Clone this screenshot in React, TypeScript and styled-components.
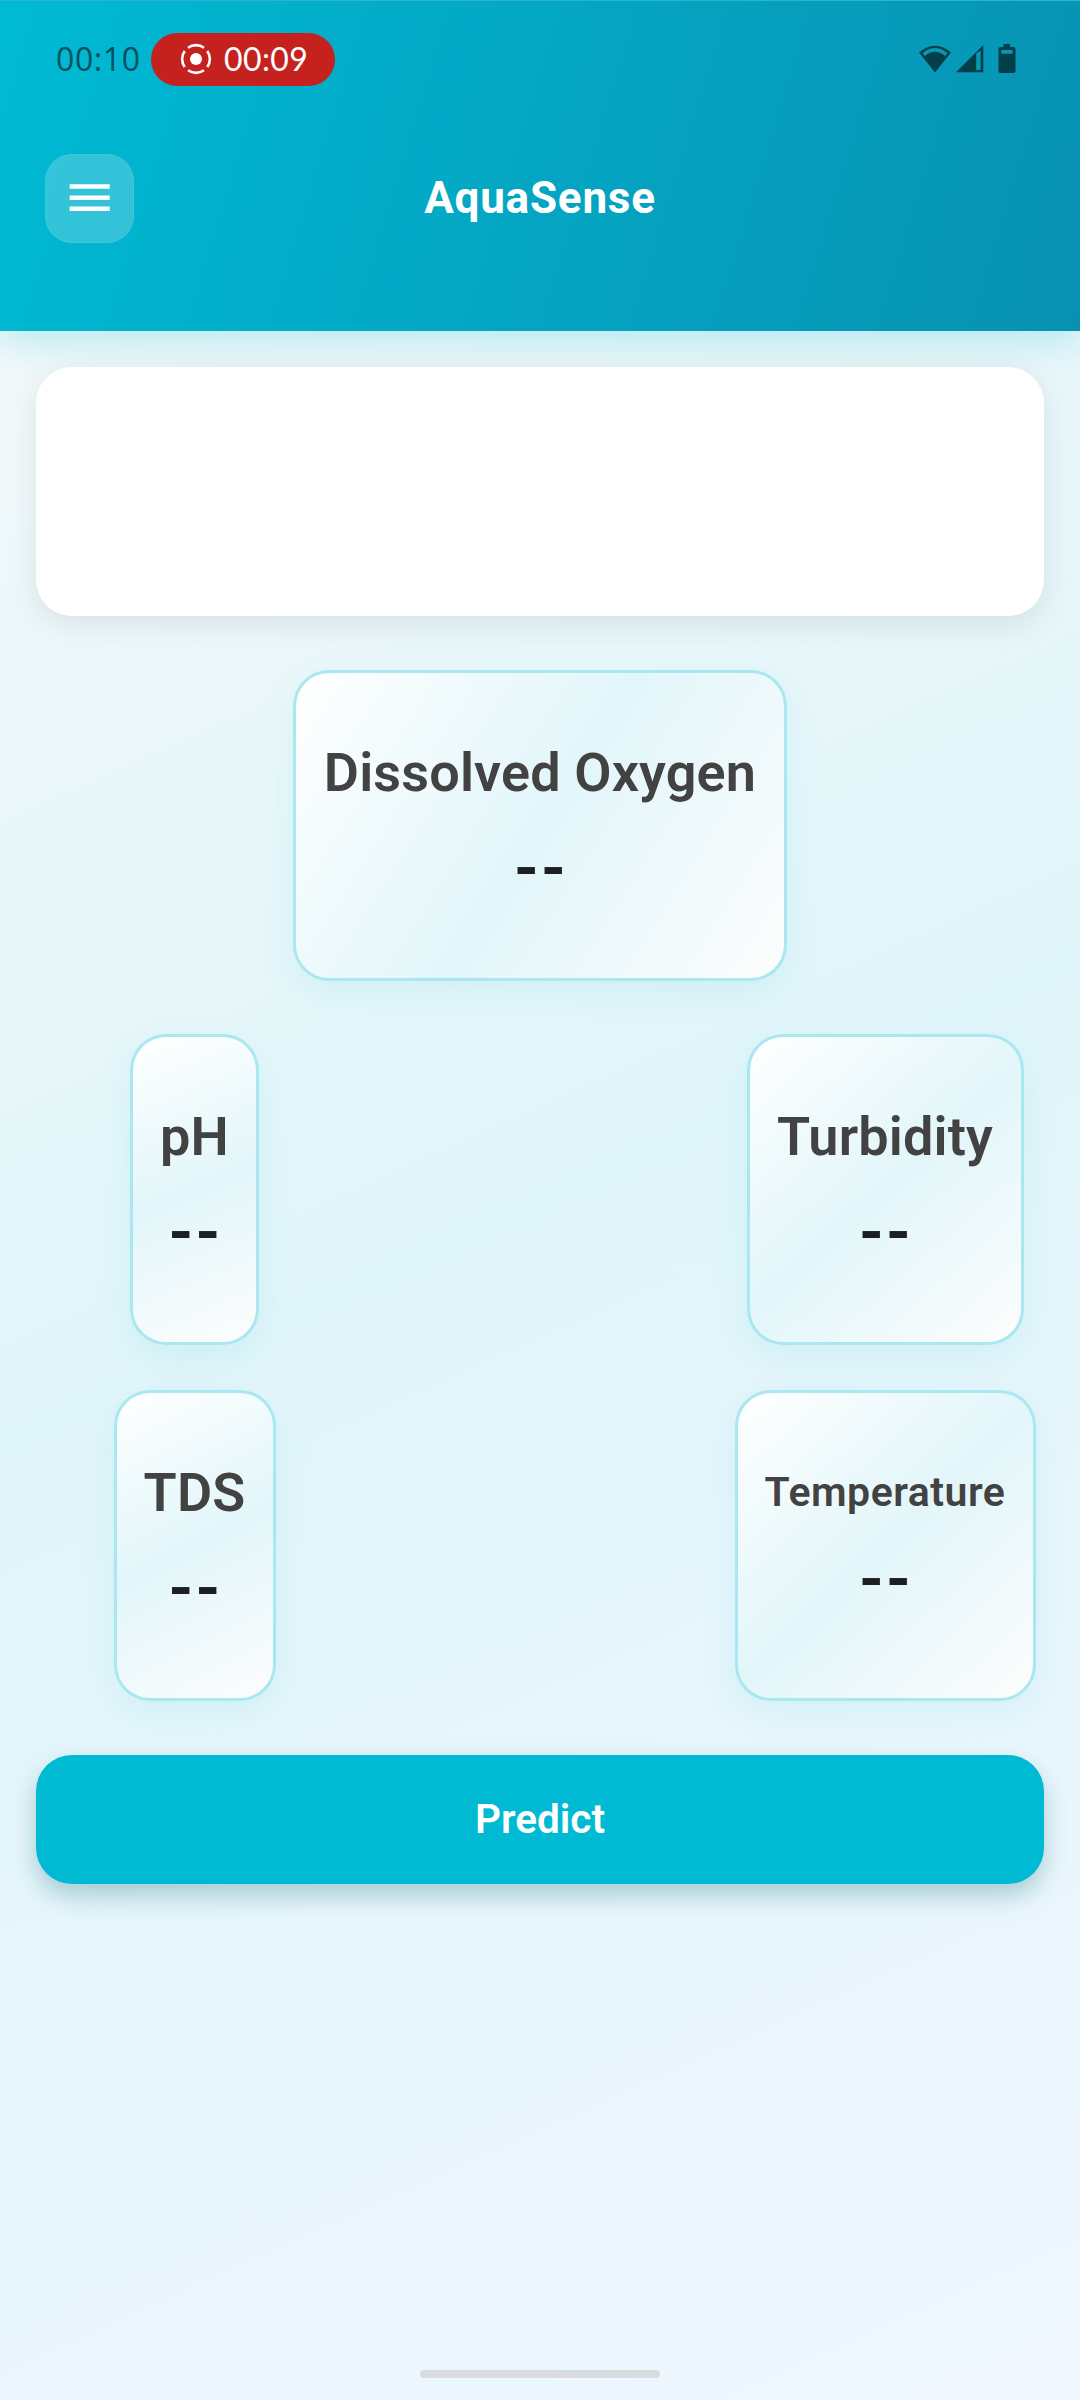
import React from 'react';
import styled, { createGlobalStyle } from 'styled-components';

const GlobalStyle = createGlobalStyle`
  * { box-sizing: border-box; }
  html, body { margin: 0; padding: 0; }
  body { font-family: Roboto, "Noto Sans", sans-serif; }
`;

const Screen = styled.div`
  width: 1080px;
  height: 2400px;
  overflow: hidden;
  display: flex;
  flex-direction: column;
  background: linear-gradient(155.8deg, #f8fafb 0%, #e0f5f9 50%, #f0f7ff 100%);
`;

const Header = styled.header`
  height: 331px;
  flex: none;
  background: linear-gradient(107deg, #00bad4 0%, #0891b2 100%);
  box-shadow: 0 12px 36px rgba(0, 188, 212, 0.24);
  border-top: 1px solid #2bb5cb;
`;

const StatusBar = styled.div`
  height: 116px;
  display: flex;
  align-items: center;
  padding: 0 64px 0 56px;
`;

const Clock = styled.span`
  width: 95px;
  font: 500 32px/40px "Open Sans", sans-serif;
  letter-spacing: 0.6px;
  color: #03505c;
`;

const RecordingPill = styled.div`
  width: 184px;
  height: 53px;
  border-radius: 27px;
  background: #c5221f;
  display: flex;
  align-items: center;
  gap: 12px;
  padding-left: 29px;
  color: #fff;
  font: 400 32px/40px Lato, sans-serif;
  letter-spacing: 0.4px;
`;

const StatusIcons = styled.div`
  margin-left: auto;
  display: flex;
  align-items: center;
  color: #033f4b;
`;

const TitleBar = styled.div`
  height: 162px;
  display: grid;
  grid-template-columns: 90px 1fr 90px;
  align-items: center;
  padding: 0 45px;
`;

const MenuButton = styled.button`
  width: 89px;
  height: 89px;
  padding: 0;
  border: 1px solid rgba(255, 255, 255, 0.06);
  border-radius: 27px;
  background: rgba(255, 255, 255, 0.2);
  display: flex;
  align-items: center;
  justify-content: center;
`;

const AppTitle = styled.h1`
  margin: 0;
  text-align: center;
  font-size: 44px;
  line-height: 52px;
  font-weight: 700;
  letter-spacing: 0.8px;
  color: #fff;
`;

const Content = styled.main`
  flex: 1;
  display: flex;
  flex-direction: column;
  align-items: center;
  padding-top: 36px;
`;

const SummaryPanel = styled.section`
  width: 1008px;
  height: 249px;
  border-radius: 36px;
  background: #fff;
  box-shadow: 0 8px 32px rgba(0, 0, 0, 0.09);
`;

const PrimaryReading = styled.div`
  margin-top: 54px;
`;

const ReadingGrid = styled.div`
  margin-top: 53px;
  display: grid;
  grid-template-columns: 389px 390px;
  column-gap: 301px;
  row-gap: 45px;
  justify-items: center;
`;

const CARD_HEIGHT = 311;

const diagonal = (width: number) => 90 + (Math.atan2(CARD_HEIGHT, width) * 180) / Math.PI;

const Card = styled.article<{ $width: number; $compact?: boolean }>`
  width: ${(p) => p.$width}px;
  height: ${CARD_HEIGHT}px;
  display: flex;
  flex-direction: column;
  align-items: center;
  padding-top: ${(p) => (p.$compact ? 74 : 68)}px;
  border: 3px solid transparent;
  border-radius: 36px;
  background:
    linear-gradient(${(p) => diagonal(p.$width)}deg, #ffffff, #e2f6fa 50%, #fdfdfd) padding-box,
    linear-gradient(#a9e8f0, #a9e8f0) border-box;
  box-shadow: 0 12px 36px rgba(0, 188, 212, 0.09);
`;

const CardLabel = styled.h2<{ $compact?: boolean }>`
  margin: 0;
  font-size: ${(p) => (p.$compact ? 41 : 54)}px;
  line-height: ${(p) => (p.$compact ? 50 : 64)}px;
  font-weight: 600;
  letter-spacing: ${(p) => (p.$compact ? 0.5 : 0.15)}px;
  white-space: nowrap;
  color: #424242;
`;

const CardValue = styled.p<{ $compact?: boolean }>`
  margin: ${(p) => (p.$compact ? 28 : 29)}px 0 0;
  font-size: 63px;
  line-height: 70px;
  font-weight: 700;
  letter-spacing: 2.2px;
  text-indent: 2px;
  color: #1d2023;
`;

const PredictButton = styled.button`
  width: 1008px;
  height: 129px;
  margin-top: 54px;
  padding: 0 0 2px;
  border: 0;
  border-radius: 36px;
  background: #00bad4;
  box-shadow: 0 12px 24px rgba(0, 100, 110, 0.28);
  font: 600 40.5px/50px Roboto, sans-serif;
  color: #fff;
`;

const HomeIndicator = styled.div`
  width: 240px;
  height: 8px;
  margin: auto 0 22px;
  border-radius: 4px;
  background: #dadcde;
`;

const RecordIcon = () => (
  <svg width="32" height="32" viewBox="-16 -16 32 32" fill="none" stroke="#fff" strokeWidth="2.6">
    <circle r="6" fill="#fff" stroke="none" />
    {[0, 90, 180, 270].map((a) => (
      <path key={a} d="M-8 -11.3A13.8 13.8 0 0 1 8 -11.3" transform={`rotate(${a})`} />
    ))}
  </svg>
);

const WifiIcon = () => (
  <svg width="34" height="30" viewBox="0 0 34 30" style={{ marginRight: 3 }}>
    <path d="M1 8.6Q17-5.2 33 8.6L17 28.4Z" fill="currentColor" />
    <path d="M4.6 9.2Q17-1 29.4 9.2L27 12Q17 3.6 7 12Z" fill="#0698b8" />
  </svg>
);

const SignalIcon = () => (
  <svg width="30" height="30" viewBox="0 0 30 30">
    <path d="M1 28.3L28.3 1V28.3ZM21.2 9.5V26H25.6V6.5Z" fill="currentColor" fillRule="evenodd" />
  </svg>
);

const BatteryIcon = () => (
  <svg width="18" height="30" viewBox="0 0 18 30" style={{ marginLeft: 13 }}>
    <path
      d="M5.5 0H12V3H15.5Q17.5 3 17.5 5V27Q17.5 29 15.5 29H2.5Q.5 29 .5 27V5Q.5 3 2.5 3H5.5ZM3.3 6V9.8H14.7V6Z"
      fill="currentColor"
      fillRule="evenodd"
    />
  </svg>
);

const MenuIcon = () => (
  <svg width="53.4" height="53.4" viewBox="0 0 24 24" fill="#fff">
    <path d="M3 18h18v-2H3v2zm0-5h18v-2H3v2zm0-7v2h18V6H3z" />
  </svg>
);

type ReadingProps = { label: string; width: number; compact?: boolean };

const Reading = ({ label, width, compact }: ReadingProps) => (
  <Card $width={width} $compact={compact}>
    <CardLabel $compact={compact}>{label}</CardLabel>
    <CardValue $compact={compact}>--</CardValue>
  </Card>
);

export default function App() {
  return (
    <Screen>
      <GlobalStyle />
      <Header>
        <StatusBar>
          <Clock>00:10</Clock>
          <RecordingPill>
            <RecordIcon />
            00:09
          </RecordingPill>
          <StatusIcons>
            <WifiIcon />
            <SignalIcon />
            <BatteryIcon />
          </StatusIcons>
        </StatusBar>
        <TitleBar>
          <MenuButton aria-label="Menu">
            <MenuIcon />
          </MenuButton>
          <AppTitle>AquaSense</AppTitle>
        </TitleBar>
      </Header>
      <Content>
        <SummaryPanel />
        <PrimaryReading>
          <Reading label="Dissolved Oxygen" width={494} />
        </PrimaryReading>
        <ReadingGrid>
          <Reading label="pH" width={129} />
          <Reading label="Turbidity" width={277} />
          <Reading label="TDS" width={162} />
          <Reading label="Temperature" width={301} compact />
        </ReadingGrid>
        <PredictButton>Predict</PredictButton>
        <HomeIndicator />
      </Content>
    </Screen>
  );
}
